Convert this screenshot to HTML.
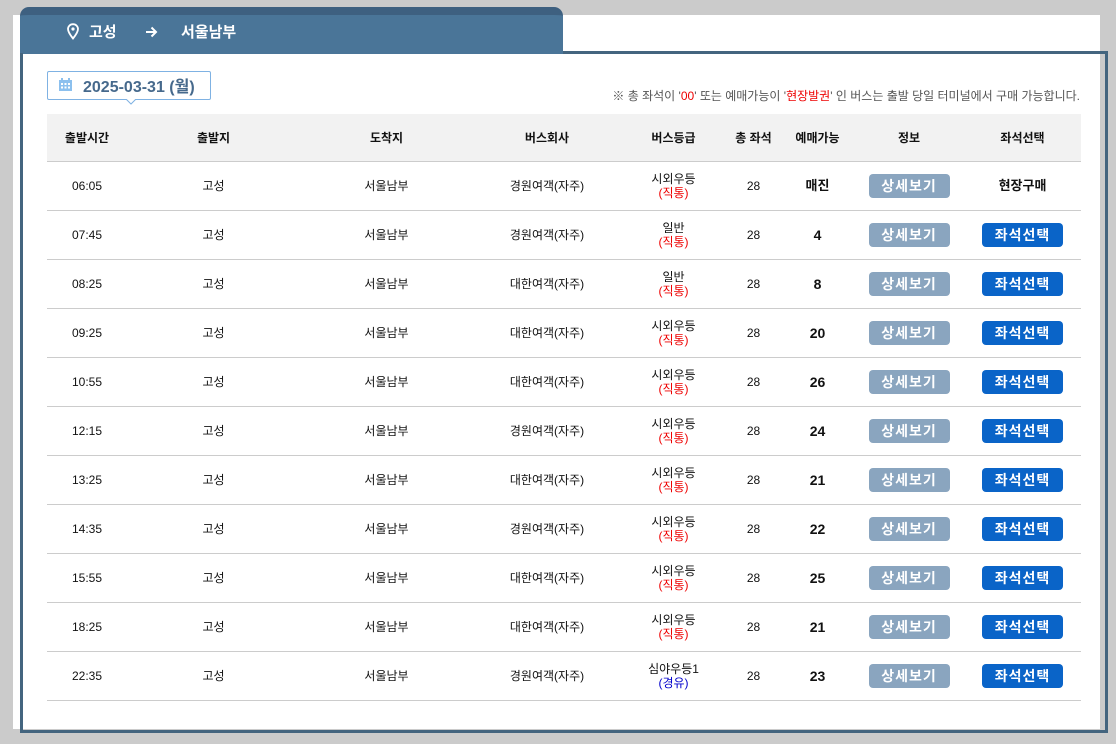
<!DOCTYPE html>
<html><head><meta charset="utf-8"><style>
*{margin:0;padding:0;box-sizing:border-box}
body{width:1116px;height:744px;background:#cbcbcb;position:relative;overflow:hidden;font-family:"Liberation Sans","Noto Sans CJK KR",sans-serif;color:#111}
.panel{position:absolute;left:13px;top:15px;width:1087px;height:714px;background:#fff}
.tab{position:absolute;left:20px;top:7px;width:543px;height:47px;background:#4a7598;border-radius:9px 9px 0 0;border-top:8px solid #3e6080;color:#fff;font-weight:bold;font-size:15px}
.tab span{line-height:18px}
.box{position:absolute;left:20px;top:53px;width:1088px;height:680px;border:3px solid #44657f;border-top:none}
.boxtop{position:absolute;left:563px;top:51px;width:545px;height:3px;background:#44657f}
.date{position:absolute;left:47px;top:71px;width:164px;height:29px;border:1px solid #7fb2e3;border-radius:2px;background:#fff;color:#46698c;font-weight:bold;font-size:16px}
.date span{line-height:18px}
.note{position:absolute;right:36px;top:89px;font-size:12px;color:#555;line-height:14px}
.note b{color:#e00;font-weight:normal}
table{position:absolute;left:47px;top:114px;width:1034px;border-collapse:collapse;font-size:12px}
th{height:47px;background:#f2f2f2;font-weight:bold;border-bottom:1px solid #ccc;font-size:12px}
td{height:49px;text-align:center;border-bottom:1px solid #ccc;line-height:14px;padding-top:1px}
.r{color:#e00}.bl{color:#00c}
.n{font-weight:bold;font-size:14px}
.b1,.b2{display:inline-block;width:81px;height:24px;line-height:24px;border-radius:4px;color:#fff;font-size:14px;font-weight:bold;letter-spacing:1px}
.b1{background:#8aa5bf}.b2{background:#0a64c8}
</style></head><body>
<div class="panel"></div>
<div class="tab">
<svg style="position:absolute;left:46px;top:8px" width="14" height="17" viewBox="0 0 14 17"><path d="M7 1.2C4.2 1.2 2 3.3 2 6 2 9.3 7 15.5 7 15.5S12 9.3 12 6C12 3.3 9.8 1.2 7 1.2Z" fill="none" stroke="#fff" stroke-width="1.8"/><circle cx="7" cy="6" r="1.6" fill="#fff"/></svg>
<span style="position:absolute;left:69px;top:9px">고성</span>
<svg style="position:absolute;left:125px;top:11px" width="13" height="12" viewBox="0 0 13 12"><path d="M1 6H11M6.5 1.5L11 6L6.5 10.5" fill="none" stroke="#fff" stroke-width="2"/></svg>
<span style="position:absolute;left:161px;top:9px">서울남부</span>
</div>
<div class="boxtop"></div>
<div class="box"></div>
<div class="date">
<svg style="position:absolute;left:11px;top:6px" width="13" height="13" viewBox="0 0 13 13"><rect x="0" y="2" width="13" height="11" fill="#8cc0ee"/><rect x="2" y="0" width="2" height="3" fill="#8cc0ee"/><rect x="9" y="0" width="2" height="3" fill="#8cc0ee"/><g fill="#fff"><rect x="2" y="5" width="2" height="2"/><rect x="5.5" y="5" width="2" height="2"/><rect x="9" y="5" width="2" height="2"/><rect x="2" y="8.5" width="2" height="2"/><rect x="5.5" y="8.5" width="2" height="2"/><rect x="9" y="8.5" width="2" height="2"/></g></svg>
<span style="position:absolute;left:35px;top:7px">2025-03-31 (월)</span>
<svg style="position:absolute;left:78px;top:27px" width="10" height="6"><path d="M0 0L5 5L10 0" fill="#fff" stroke="#7fb2e3"/></svg>
</div>
<div class="note">※ 총 좌석이 '<b>00</b>' 또는 예매가능이 '<b>현장발권</b>' 인 버스는 출발 당일 터미널에서 구매 가능합니다.</div>
<table>
<colgroup><col style="width:80px"><col style="width:173px"><col style="width:173px"><col style="width:148px"><col style="width:105px"><col style="width:55px"><col style="width:73px"><col style="width:110px"><col style="width:117px"></colgroup>
<tr><th>출발시간</th><th>출발지</th><th>도착지</th><th>버스회사</th><th>버스등급</th><th>총 좌석</th><th>예매가능</th><th>정보</th><th>좌석선택</th></tr>
<tr><td>06:05</td><td>고성</td><td>서울남부</td><td>경원여객(자주)</td><td>시외우등<br><span class="r">(직통)</span></td><td>28</td><td class="n" style="font-size:13px">매진</td><td><span class="b1">상세보기</span></td><td class="n" style="font-size:13px">현장구매</td></tr>
<tr><td>07:45</td><td>고성</td><td>서울남부</td><td>경원여객(자주)</td><td>일반<br><span class="r">(직통)</span></td><td>28</td><td class="n">4</td><td><span class="b1">상세보기</span></td><td><span class="b2">좌석선택</span></td></tr>
<tr><td>08:25</td><td>고성</td><td>서울남부</td><td>대한여객(자주)</td><td>일반<br><span class="r">(직통)</span></td><td>28</td><td class="n">8</td><td><span class="b1">상세보기</span></td><td><span class="b2">좌석선택</span></td></tr>
<tr><td>09:25</td><td>고성</td><td>서울남부</td><td>대한여객(자주)</td><td>시외우등<br><span class="r">(직통)</span></td><td>28</td><td class="n">20</td><td><span class="b1">상세보기</span></td><td><span class="b2">좌석선택</span></td></tr>
<tr><td>10:55</td><td>고성</td><td>서울남부</td><td>대한여객(자주)</td><td>시외우등<br><span class="r">(직통)</span></td><td>28</td><td class="n">26</td><td><span class="b1">상세보기</span></td><td><span class="b2">좌석선택</span></td></tr>
<tr><td>12:15</td><td>고성</td><td>서울남부</td><td>경원여객(자주)</td><td>시외우등<br><span class="r">(직통)</span></td><td>28</td><td class="n">24</td><td><span class="b1">상세보기</span></td><td><span class="b2">좌석선택</span></td></tr>
<tr><td>13:25</td><td>고성</td><td>서울남부</td><td>대한여객(자주)</td><td>시외우등<br><span class="r">(직통)</span></td><td>28</td><td class="n">21</td><td><span class="b1">상세보기</span></td><td><span class="b2">좌석선택</span></td></tr>
<tr><td>14:35</td><td>고성</td><td>서울남부</td><td>경원여객(자주)</td><td>시외우등<br><span class="r">(직통)</span></td><td>28</td><td class="n">22</td><td><span class="b1">상세보기</span></td><td><span class="b2">좌석선택</span></td></tr>
<tr><td>15:55</td><td>고성</td><td>서울남부</td><td>대한여객(자주)</td><td>시외우등<br><span class="r">(직통)</span></td><td>28</td><td class="n">25</td><td><span class="b1">상세보기</span></td><td><span class="b2">좌석선택</span></td></tr>
<tr><td>18:25</td><td>고성</td><td>서울남부</td><td>대한여객(자주)</td><td>시외우등<br><span class="r">(직통)</span></td><td>28</td><td class="n">21</td><td><span class="b1">상세보기</span></td><td><span class="b2">좌석선택</span></td></tr>
<tr><td>22:35</td><td>고성</td><td>서울남부</td><td>경원여객(자주)</td><td>심야우등1<br><span class="bl">(경유)</span></td><td>28</td><td class="n">23</td><td><span class="b1">상세보기</span></td><td><span class="b2">좌석선택</span></td></tr>
</table>
</body></html>
